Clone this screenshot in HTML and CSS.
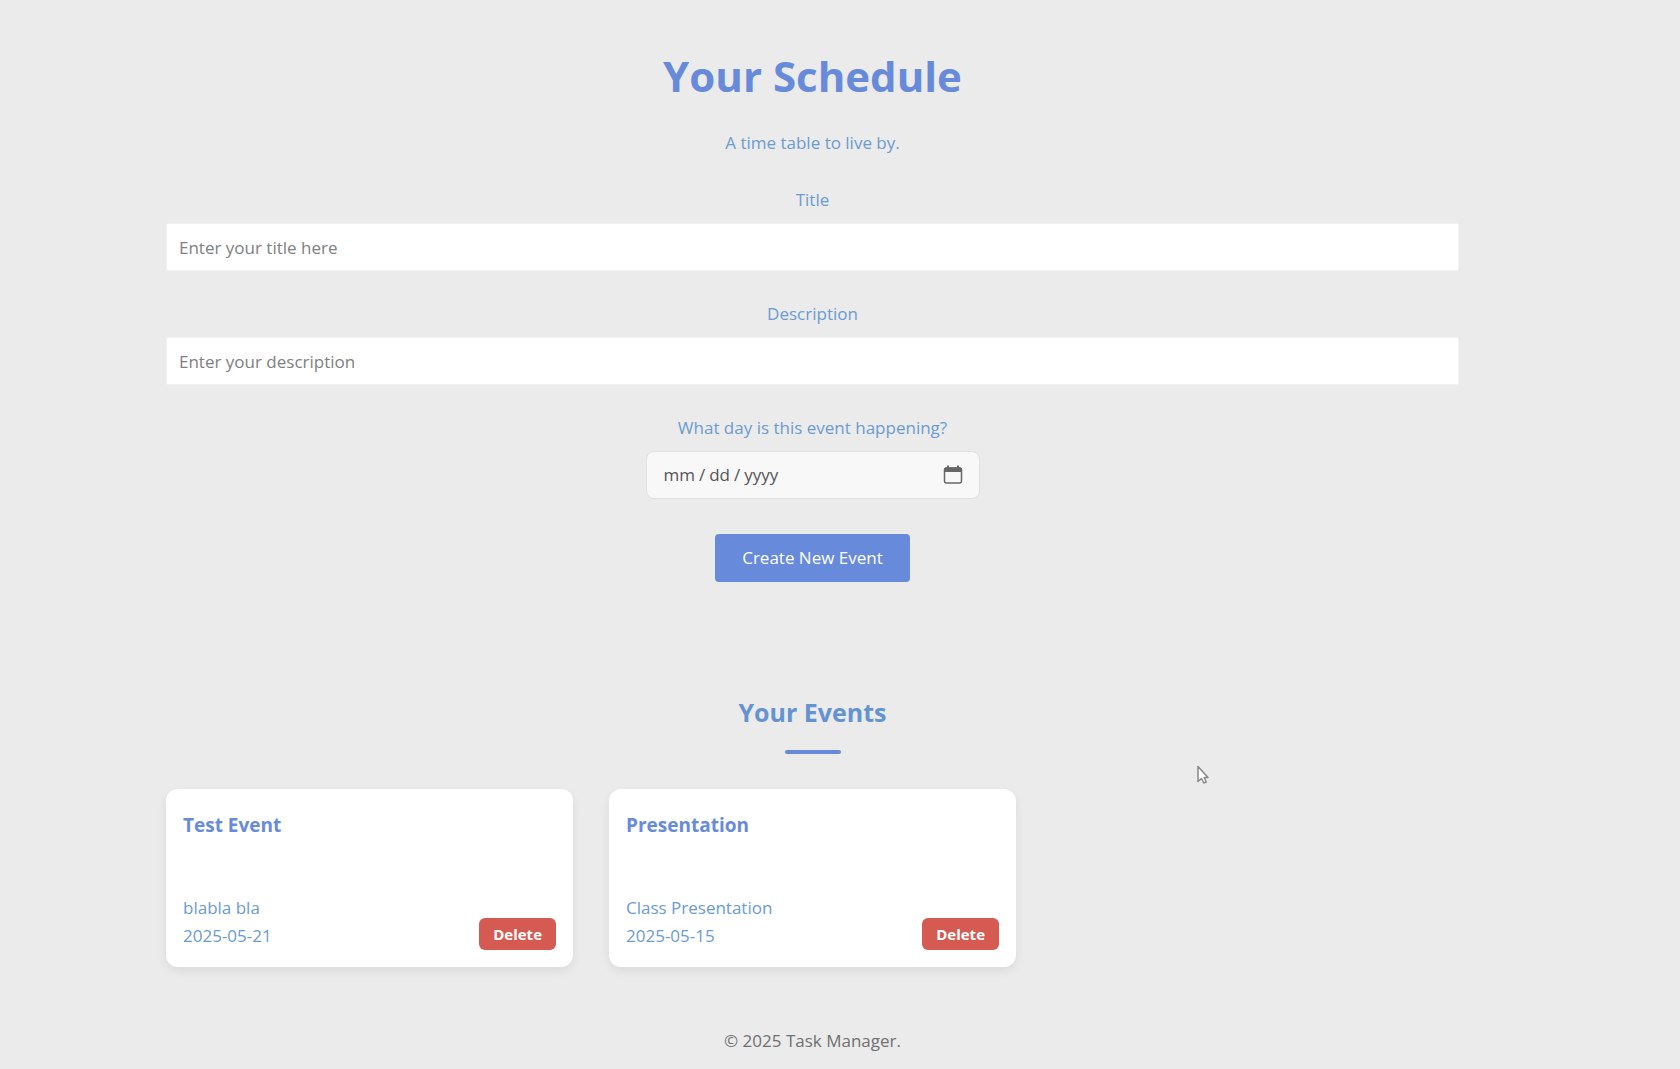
FILE: index.html
```html
<!DOCTYPE html>
<html lang="en">
<head>
<meta charset="utf-8">
<title>Your Schedule</title>
<link rel="stylesheet" href="styles.css">
</head>
<body>
<div class="page">
  <header class="header">
    <h1 class="page-title">Your Schedule</h1>
    <p class="tagline">A time table to live by.</p>
  </header>
  <main>
    <form class="form">
      <div class="field">
        <label for="title">Title</label>
        <input class="text-input" id="title" type="text" placeholder="Enter your title here">
      </div>
      <div class="field">
        <label for="description">Description</label>
        <input class="text-input" id="description" type="text" placeholder="Enter your description">
      </div>
      <div class="field">
        <label for="date">What day is this event happening?</label>
        <input class="date-input" id="date" type="date">
      </div>
      <button class="create" type="button">Create New Event</button>
    </form>
    <section class="events">
      <h2 class="events-title">Your Events</h2>
      <div class="cards">
        <article class="card">
          <h3 class="card-title">Test Event</h3>
          <div class="card-body">
            <div>
              <p>blabla bla</p>
              <p>2025-05-21</p>
            </div>
            <button class="delete" type="button">Delete</button>
          </div>
        </article>
        <article class="card">
          <h3 class="card-title">Presentation</h3>
          <div class="card-body">
            <div>
              <p>Class Presentation</p>
              <p>2025-05-15</p>
            </div>
            <button class="delete" type="button">Delete</button>
          </div>
        </article>
      </div>
    </section>
  </main>
  <footer class="footer">© 2025 Task Manager.</footer>
</div>
<svg class="cursor" width="14" height="20" viewBox="0 0 14 20" aria-hidden="true">
  <path d="M2 1.500V16.500L5.500 13.500L7.800 18L10.200 17L8.200 12.500H12Z" fill="#fff" stroke="#888" stroke-width="1.500" stroke-linejoin="round"/>
</svg>
</body>
</html>
```
FILE: styles.css
```css
* {
  box-sizing: border-box;
}

body {
  margin: 0;
  background: #ebebeb;
  color: #6b9bd1;
  font-family: "Open Sans", "Noto Sans", sans-serif;
  font-size: 17px;
  line-height: 28px;
}

h1,
h2,
h3,
p {
  margin: 0;
}

input,
button {
  font: inherit;
}

.page {
  padding: 44px 221px 15px 166px;
}

.header {
  text-align: center;
}

.page-title {
  margin-bottom: 21px;
  color: #678adb;
  font-size: 42px;
  line-height: 64px;
}

.form {
  display: flex;
  flex-direction: column;
  align-items: center;
  gap: 29px;
  margin-top: 29px;
}

.field {
  display: flex;
  flex-direction: column;
  align-items: center;
  gap: 9px;
  width: 100%;
}

.text-input {
  width: 100%;
  height: 48px;
  padding: 0 12px;
  border: 1px solid #f2f2f2;
  border-radius: 2px;
  background: #fff;
  color: #333;
}

.text-input::placeholder {
  color: #808080;
  opacity: 1;
}

.date-input {
  width: 334px;
  height: 48px;
  padding: 0 16px;
  border: 1px solid #e0e0e0;
  border-radius: 8px;
  background: #f8f8f8;
  color: #555;
}

.date-input::-webkit-datetime-edit-text {
  padding: 0 3px;
}

.date-input::-webkit-calendar-picker-indicator {
  width: 20px;
  height: 20px;
  padding: 0;
  background: url("data:image/svg+xml,%3Csvg xmlns='http://www.w3.org/2000/svg' viewBox='0 0 20 20'%3E%3Crect x='1.500' y='3' width='17' height='15' rx='2' fill='none' stroke='%23666' stroke-width='1.500'/%3E%3Cpath d='M1 7V4.500Q1 2.500 3 2.500H4V.5H6V2.500H14V.5H16V2.500H17Q19 2.500 19 4.500V7Z' fill='%23666'/%3E%3C/svg%3E") center / 20px 20px no-repeat;
}

.create {
  height: 48px;
  margin-top: 6px;
  padding: 0 27px;
  border: 0;
  border-radius: 4px;
  background: #678adb;
  color: #fff;
}

.events {
  margin-top: 112px;
}

.events-title {
  color: #6593d1;
  font-size: 25px;
  line-height: 36px;
  text-align: center;
}

.events-title::after {
  content: "";
  display: block;
  width: 56px;
  height: 4px;
  margin: 20px auto 35px;
  border-radius: 2px;
  background: #678adb;
}

.cards {
  display: grid;
  grid-template-columns: repeat(3, 1fr);
  gap: 36px;
}

.card {
  padding: 22px 17px 17px;
  border-radius: 12px;
  background: #fff;
  box-shadow: 0 4px 10px rgba(0, 0, 0, 0.07);
}

.card-title {
  margin-bottom: 55px;
  color: #678adb;
  font-size: 19px;
  line-height: 28px;
}

.card-body {
  display: flex;
  justify-content: space-between;
  align-items: flex-end;
}

.delete {
  height: 32px;
  padding: 0 14px;
  border: 0;
  border-radius: 6px;
  background: #d45a52;
  color: #fff;
  font-size: 15px;
  font-weight: 700;
}

.footer {
  margin-top: 60px;
  color: #707070;
  text-align: center;
}

.cursor {
  position: absolute;
  top: 765px;
  left: 1196px;
}
```
